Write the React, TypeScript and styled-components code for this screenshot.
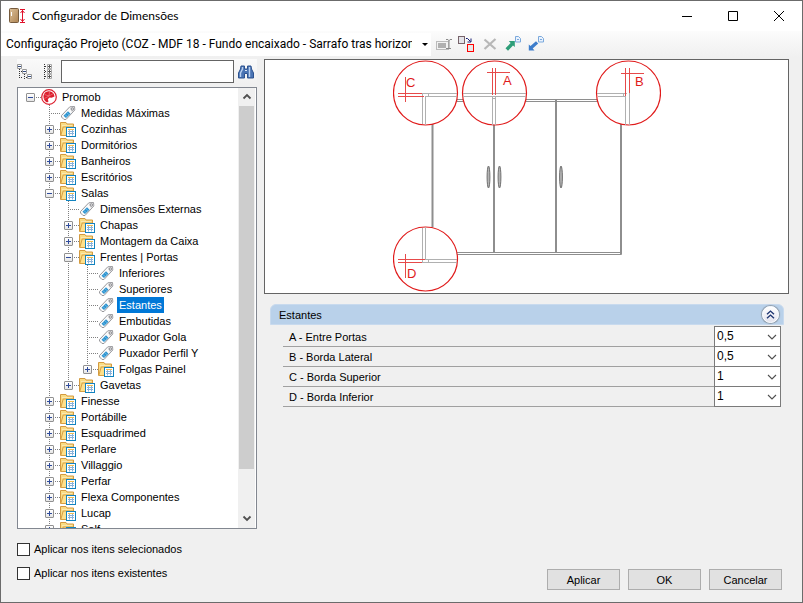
import React, { useState } from "react";
import styled, { createGlobalStyle, css } from "styled-components";

const ui = '"Liberation Sans", Arial, sans-serif';
const caption = 'Lato, "Segoe UI", sans-serif';
const toolbarFont = 'Roboto, "Segoe UI", sans-serif';

const GlobalStyle = createGlobalStyle`
  *, *::before, *::after { box-sizing: border-box; }
  html, body, #root { height: 100%; }
  body { margin: 0; font: 11px/16px ${ui}; color: #000; background: #f0f0f0; }
  button, input, select { font: inherit; color: inherit; }
  svg { display: block; flex: none; }
`;

const Window = styled.main`
  display: flex;
  flex-direction: column;
  height: 100%;
  border: 1px solid #6b6b6b;
  background: #f0f0f0;
`;

const TitleBar = styled.header`
  display: flex;
  align-items: center;
  gap: 6px;
  height: 30px;
  flex: none;
  padding-left: 8px;
  background: #fff;
`;

const Title = styled.h1`
  flex: 1;
  margin: 0;
  font: 400 12px/16px ${caption};
  white-space: nowrap;
`;

const CaptionButtons = styled.div`
  display: flex;
`;

const CaptionButton = styled.button`
  display: flex;
  align-items: center;
  justify-content: center;
  width: 46px;
  height: 30px;
  padding: 0;
  border: 0;
  background: none;
  &:hover { background: #e5e5e5; }
`;

const Toolbar = styled.div`
  display: flex;
  align-items: center;
  flex: none;
  height: 26px;
  background: linear-gradient(#fcfcfc, #f0f0f0);
`;

const ProjectBox = styled.div`
  display: grid;
  align-items: center;
  width: 430px;
  height: 23px;
  background: #fff;
  > * { grid-area: 1 / 1; }
  > svg { justify-self: end; margin-right: 3px; pointer-events: none; }
`;

const ProjectSelect = styled.select`
  appearance: none;
  width: 100%;
  height: 23px;
  padding: 0 19px 0 5px;
  border: 0;
  outline: 0;
  background: none;
  font: 12px/16px ${toolbarFont};
`;

const ToolButton = styled.button`
  display: flex;
  align-items: center;
  justify-content: center;
  width: 23px;
  height: 23px;
  padding: 0;
  border: 0;
  background: none;
`;

const TreeButton = styled(ToolButton)`
  width: auto;
`;

const ToolGroup = styled.div`
  display: flex;
  padding-left: 1px;
`;

const TreeTools = styled.div`
  display: flex;
  gap: 10px;
  padding-right: 9px;
`;

const Body = styled.div`
  display: flex;
  flex: 1;
  min-height: 0;
  gap: 7px;
  padding: 2px 13px 12px 16px;
`;

const Sidebar = styled.aside`
  display: flex;
  flex-direction: column;
  width: 240px;
  flex: none;
`;

const SearchRow = styled.div`
  display: flex;
  align-items: center;
  height: 25px;
  margin-bottom: 3px;
  background: linear-gradient(#fafafa, #f0f0f0);
`;

const SearchInput = styled.input`
  flex: 1;
  min-width: 0;
  height: 23px;
  padding: 0 4px;
  border: 1px solid #646464;
  outline: 0;
  background: #fff;
`;

const TreeBox = styled.div`
  display: flex;
  flex: 1;
  min-height: 0;
  border: 1px solid #828790;
  background: #fff;
  padding-right: 1px;
`;

const TreeList = styled.ul`
  flex: 1;
  min-width: 0;
  margin: 0;
  padding: 1px 0 0 4px;
  list-style: none;
  overflow: hidden;
`;

const TreeRow = styled.li`
  display: flex;
  align-items: center;
  height: 16px;
`;

const Guide = styled.span<{ $line?: "full" | "upper" | "none"; $branch?: boolean }>`
  position: relative;
  display: flex;
  align-items: center;
  justify-content: center;
  flex: none;
  width: 19px;
  height: 16px;
  padding-right: 2px;
  ${(p) => p.$line && p.$line !== "none" && css`
    &::before {
      content: "";
      position: absolute;
      left: 8px;
      top: 0;
      width: 1px;
      height: ${p.$line === "upper" ? "8px" : "16px"};
      background: repeating-linear-gradient(#808080 0 1px, transparent 1px 2px);
    }
  `}
  ${(p) => p.$branch && css`
    &::after {
      content: "";
      position: absolute;
      left: 9px;
      right: 0;
      top: 8px;
      height: 1px;
      background: repeating-linear-gradient(90deg, transparent 0 1px, #808080 1px 2px);
    }
  `}
`;

const Expander = styled.button`
  position: relative;
  z-index: 1;
  width: 9px;
  height: 9px;
  padding: 0;
  border: 1px solid #919191;
  border-radius: 1px;
  background: linear-gradient(#fff, #e6e6e6);
  > svg { width: 7px; height: 7px; }
`;

const NodeLabel = styled.span<{ $selected?: boolean }>`
  margin-left: 3px;
  padding: 0 2px;
  white-space: nowrap;
  color: ${(p) => (p.$selected ? "#fff" : "#000")};
  background: ${(p) => (p.$selected ? "#0078d7" : "transparent")};
`;

const ScrollBar = styled.div`
  display: flex;
  flex-direction: column;
  width: 17px;
  padding-bottom: 1px;
  background: #f0f0f0;
`;

const ScrollButton = styled.button`
  display: flex;
  align-items: center;
  justify-content: center;
  height: 18px;
  flex: none;
  padding: 0;
  border: 0;
  background: #f0f0f0;
`;

const ScrollTrack = styled.div`
  flex: 1;
`;

const ScrollThumb = styled.div`
  height: 90%;
  margin: 0 1px;
  background: #cdcdcd;
`;

const CheckList = styled.div`
  display: flex;
  flex-direction: column;
  gap: 8px;
  padding: 12px 0 9px;
`;

const CheckLabel = styled.label`
  display: flex;
  align-items: center;
  gap: 4px;
  height: 16px;
`;

const CheckBox = styled.input`
  appearance: none;
  width: 13px;
  height: 13px;
  margin: 0;
  border: 1px solid #333;
  background: #fff;
  &:checked { box-shadow: inset 0 0 0 2px #fff; background: #0078d7; }
`;

const Content = styled.section`
  display: flex;
  flex-direction: column;
  flex: 1;
  min-width: 0;
`;

const Preview = styled.div`
  display: flex;
  justify-content: center;
  border: 1px solid #646464;
  background: #fff;
`;

const Group = styled.section`
  margin: 10px 5px 0 6px;
`;

const GroupHeader = styled.header`
  display: flex;
  align-items: center;
  justify-content: space-between;
  height: 21px;
  padding: 0 4px 0 8px;
  border: 1px solid #c8daee;
  border-radius: 6px 6px 0 0;
  background: #b9d1ea;
`;

const GroupTitle = styled.h2`
  margin: 0;
  font: 400 11px/16px ${ui};
`;

const CollapseButton = styled.button`
  display: flex;
  align-items: center;
  justify-content: center;
  width: 17px;
  height: 17px;
  padding: 0;
  border: 1px solid #fff;
  border-radius: 50%;
  background: linear-gradient(#fff, #e4e4ee);
  box-shadow: 0 0 1px 1px #8f9ba8;
`;

const FieldList = styled.div`
  margin: 2px 3px 0 13px;
`;

const Field = styled.div`
  display: flex;
  align-items: center;
  height: 20px;
  border-bottom: 1px solid #a0a0a0;
  padding-left: 6px;
`;

const FieldLabel = styled.label`
  flex: 1;
`;

const ValueBox = styled.div`
  display: grid;
  align-items: center;
  align-self: start;
  width: 67px;
  height: 21px;
  margin-top: -1px;
  border: 1px solid #7a7a7a;
  background: #fff;
  > * { grid-area: 1 / 1; }
  > svg { justify-self: end; margin-right: 3px; pointer-events: none; }
`;

const ValueSelect = styled.select`
  appearance: none;
  width: 100%;
  height: 19px;
  padding: 0 18px 1px 2px;
  border: 0;
  outline: 0;
  background: none;
  font-size: 12px;
`;

const Actions = styled.footer`
  display: flex;
  justify-content: flex-end;
  gap: 8px;
  margin-top: auto;
  padding-right: 7px;
`;

const ActionButton = styled.button`
  width: 73px;
  height: 21px;
  padding: 0;
  border: 1px solid #adadad;
  background: #e1e1e1;
`;

const FolderIcon = () => (
  <svg width="16" height="16" viewBox="0 0 16 16">
    <path d="M.5 14.500V1.500H6l1 1.500h6.500V7" fill="#f9dc84" stroke="#d39a40" />
    <path d="M.8 14.500 3.200 6H13v8.500z" fill="#ffe08a" stroke="#d6a044" />
    <path d="M2 4.500h10" stroke="#fbe9b0" />
    <rect x="6.500" y="6.500" width="9" height="9" fill="#fff" stroke="#1283bf" />
    <path d="M8 8.500h6" stroke="#f1bd4f" />
    <path d="M8 10.500h6M8 12.500h6M9.500 9v5.500M12.500 9v5.500" stroke="#8bb3da" />
  </svg>
);

const TagIcon = () => (
  <svg width="16" height="16" viewBox="0 0 16 16">
    <path d="M1.500 10.500 9.800 1.800 14.500 1.500 14.800 5 6 14.500H4L1.500 12z" fill="#fafafa" stroke="#98989c" />
    <path d="M10 2.500 14 2l.4 3-2.500 2.500z" fill="#d9d9dc" />
    <path d="m3.500 10.700 4.500-4.500 2.500 2.500L6 13z" fill="#2d93cf" />
    <path d="m5 9.500 2.300 2.300M6.800 7.500 9 9.800" stroke="#8fd0f2" strokeWidth=".7" />
    <circle cx="12.300" cy="4" r="1.200" fill="#fff" stroke="#858589" />
  </svg>
);

const PromobIcon = () => (
  <svg width="16" height="16" viewBox="0 0 16 16">
    <circle cx="8" cy="8" r="7.300" fill="#fff" stroke="#dc1f2e" strokeWidth="1.200" />
    <path d="M8.300 2.300C4.500 2 2.300 5 2.500 8c.1 2.500 1.500 4.500 3.500 5.500l1.500-1-.7-2.200L8.500 8.500l2 .3 3-1.300C13.300 4.500 11 2.500 8.300 2.300z" fill="#dc1f2e" />
    <path d="M8.500 2.500 8 7M3.500 5.500 8 7l4.500-2.500M3.500 9.500 8 7" stroke="#f58b92" strokeWidth=".6" fill="none" />
  </svg>
);

const CabinetIcon = () => (
  <svg width="17" height="16" viewBox="0 0 17 16">
    <defs>
      <linearGradient id="wood" x1="0" x2="1" y1="0" y2="1">
        <stop offset="0" stopColor="#dcc19a" />
        <stop offset="1" stopColor="#ae8453" />
      </linearGradient>
    </defs>
    <rect x=".5" y=".5" width="9" height="14" rx="1" fill="url(#wood)" stroke="#765b3d" />
    <path d="M2.500 4v4" stroke="#fff" />
    <path d="M11 1.500h5M11 14.500h5" stroke="#e0102a" />
    <path d="M13.500 2v12M11.500 5l2-2.500 2 2.500M11.500 11l2 2.500 2-2.500" fill="none" stroke="#e0102a" />
  </svg>
);

const Chevron = ({ up = false, thin = false }: { up?: boolean; thin?: boolean }) => (
  <svg width="10" height="10" viewBox="0 0 10 10">
    <path
      d={up ? "M1.500 6.500 5 3l3.500 3.500" : thin ? "M1 3l4 4 4-4" : "M1.500 3.500 5 7l3.500-3.500"}
      fill="none"
      stroke="#505050"
      strokeWidth={thin ? 1.1 : 1.8}
    />
  </svg>
);

const CollapseTreeIcon = () => (
  <svg width="16" height="16" viewBox="0 0 16 16" fill="none">
    <path d="M2.500 5v10M7.500 10v5M4 7.500h2M4 13.500h2M9 13.500h1" stroke="#333" strokeDasharray="1 1" />
    <path d="M.5.500h4v4h-4zM5.500 5.500h4v4h-4zM10.500 10.500h4v4h-4z" fill="#fff" stroke="#9a9a9a" />
    <path d="M1 2.500h3M6 7.500h3M11 12.500h3" stroke="#344d82" />
  </svg>
);

const ExpandTreeIcon = () => (
  <svg width="9" height="16" viewBox="0 0 9 16" fill="none">
    <path d="M1.500 0v16M2 2.500h2M2 7.500h2M2 12.500h2" stroke="#333" strokeDasharray="1 1" />
    <path d="M4.500.500h4v4h-4zM4.500 5.500h4v4h-4zM4.500 10.500h4v4h-4z" fill="#fff" stroke="#a8a8a8" />
    <path d="M5 2.500h3M6.500 1v3M5 7.500h3M6.500 6v3M5 12.500h3M6.500 11v3" stroke="#555" />
  </svg>
);

const BinocularsIcon = () => (
  <svg width="16" height="14" viewBox="0 0 16 14">
    <path d="M3 1h3.500v3h3V1H13l.5 3 2 4v5H9.500V8.500h-3V13H.5V8l2-4z" fill="#4a74b4" stroke="#2c528f" />
    <path d="M4.500 2v2L2.500 8v4M11.500 2v2L11.500 8v4" stroke="#b9d0f0" strokeWidth="1.400" fill="none" />
    <path d="M7 5.500h2" stroke="#dce8f8" />
  </svg>
);

const RenameIcon = () => (
  <svg width="16" height="13" viewBox="0 0 16 13" fill="none">
    <rect x=".5" y="3.500" width="12" height="8" fill="#f2f2f2" stroke="#bbb" />
    <path d="M2 5h8v5H2z" fill="#b0b0b0" />
    <path d="M10 1.500h2l1 1 1-1h2M13 2v8M10 10.500h5" stroke="#8a8a8a" />
  </svg>
);

const ReplaceIcon = () => (
  <svg width="17" height="17" viewBox="0 0 17 17" fill="none">
    <rect x=".5" y=".5" width="6" height="7" fill="#e4e4e9" stroke="#77636a" />
    <rect x="9.500" y="8.500" width="6" height="7" fill="#e8e8e8" stroke="#f00" />
    <path d="M8 2.500h1.500l3 3M13 2.500v3.500H9.500" stroke="#141b73" />
  </svg>
);

const DeleteIcon = () => (
  <svg width="14" height="12" viewBox="0 0 14 12">
    <path d="m1.500 1.500 11 9.500M12.500 1 1.500 11" stroke="#b7b7b7" strokeWidth="2.200" />
  </svg>
);

const TransferIcon = ({ color, down = false }: { color: string; down?: boolean }) => (
  <svg width="16" height="16" viewBox="0 0 16 16">
    <path d={down ? "M.8 14.500V8.500l1.700 1.500L8 5.200l2.200 2.300-5.500 5L6.500 14.500z" : "M9.800 5v6L8 9.400 3 14.800.5 12.300 5.600 7.100 3.800 5z"} fill={color} />
    <path d="M10.500.500h3l2 2v3.500h-5z" fill="#e9f2fd" stroke="#7ba9dc" />
    <path d="M12 3.500h2" stroke="#7ba9dc" />
  </svg>
);

const CabinetDrawing = () => (
  <svg width="268" height="233" viewBox="393 60 268 233" fill="none" role="img" aria-label="Estantes">
    <g stroke="#8e8e8e" strokeWidth="1">
      <path d="M457 99.500h8M457 101.500h8M526 99.500h72M526 101.500h72M457 252.500h164.500M457 254.500h164.500v-2" />
    </g>
    <path d="M432.500 124v103M494 125v127.500M556 100v152.500M621 124v130" stroke="#8e8e8e" strokeWidth="2" />
    <g fill="#fff" stroke="#e01b1b" strokeWidth="1.200">
      <circle cx="425.500" cy="93" r="32" />
      <circle cx="494.500" cy="93" r="32" />
      <circle cx="628.500" cy="93" r="32" />
      <circle cx="425.500" cy="259" r="32" />
    </g>
    <g stroke="#b0b0b0">
      <path d="M422.500 93v31M425.500 97v28M422 93.500h35M425 96.500h32M428.500 94v2" />
      <path d="M463 93.500h63M463 96.500h63M492.500 97v28M495.500 97v28M492.500 98.500h3" />
      <path d="M597 93.500h30M598 96.500h28M625.500 96v29M629.500 93v32M623.500 94v2" />
      <path d="M422.500 228v34M425.500 227v32M425 259.500h32M422 262.500h35M428.500 260v2" />
    </g>
    <g stroke="#e64a4a">
      <path d="M398 93.500h24M398 96.500h26M405.500 77v25" />
      <path d="M487 72.500h23M492.500 68v27M495.500 68v27" />
      <path d="M621 73.500h23M625.500 68v28M629.500 68v25" />
      <path d="M398 259.500h27M398 262.500h24M405.500 254v24" />
    </g>
    <g fill="#b4b4b4" stroke="#707070">
      <ellipse cx="488.500" cy="177" rx="1.400" ry="11" />
      <ellipse cx="499.500" cy="177" rx="1.400" ry="11" />
      <ellipse cx="561" cy="177" rx="1.400" ry="11" />
    </g>
    <g fill="#e01b1b" fontFamily="Liberation Sans, Arial, sans-serif" fontSize="13">
      <text x="406" y="87">C</text>
      <text x="503" y="85">A</text>
      <text x="635" y="86">B</text>
      <text x="407" y="278">D</text>
    </g>
  </svg>
);

type Line = "full" | "upper" | "none";
type Node = { label: string; icon?: "tag" | "root"; open?: boolean; children?: Node[] };

const tree: Node[] = [
  {
    label: "Promob",
    icon: "root",
    open: true,
    children: [
      { label: "Medidas Máximas", icon: "tag" },
      { label: "Cozinhas" },
      { label: "Dormitórios" },
      { label: "Banheiros" },
      { label: "Escritórios" },
      {
        label: "Salas",
        open: true,
        children: [
          { label: "Dimensões Externas", icon: "tag" },
          { label: "Chapas" },
          { label: "Montagem da Caixa" },
          {
            label: "Frentes | Portas",
            open: true,
            children: [
              { label: "Inferiores", icon: "tag" },
              { label: "Superiores", icon: "tag" },
              { label: "Estantes", icon: "tag" },
              { label: "Embutidas", icon: "tag" },
              { label: "Puxador Gola", icon: "tag" },
              { label: "Puxador Perfil Y", icon: "tag" },
              { label: "Folgas Painel" },
            ],
          },
          { label: "Gavetas" },
        ],
      },
      { label: "Finesse" },
      { label: "Portábille" },
      { label: "Esquadrimed" },
      { label: "Perlare" },
      { label: "Villaggio" },
      { label: "Perfar" },
      { label: "Flexa Componentes" },
      { label: "Lucap" },
      { label: "Self" },
    ],
  },
];

type BranchProps = { nodes: Node[]; guides: Line[]; selected: string; onSelect: (label: string) => void };

const Branch = ({ nodes, guides, selected, onSelect }: BranchProps) => (
  <>
    {nodes.map((node, i) => {
      const root = node.icon === "root";
      const last = i === nodes.length - 1;
      return (
        <React.Fragment key={node.label}>
          <TreeRow role="treeitem" aria-level={guides.length + 1} aria-selected={selected === node.label} onClick={() => onSelect(node.label)}>
            {guides.map((line, n) => <Guide key={n} $line={line} />)}
            <Guide $line={root ? "none" : last ? "upper" : "full"} $branch>
              {node.icon !== "tag" && (
                <Expander aria-label={node.open ? "Recolher" : "Expandir"}>
                  <svg viewBox="0 0 7 7">
                    <path d={node.open ? "M1 3.500h5" : "M1 3.500h5M3.500 1v5"} stroke="#2f4b9b" />
                  </svg>
                </Expander>
              )}
            </Guide>
            {root ? <PromobIcon /> : node.icon === "tag" ? <TagIcon /> : <FolderIcon />}
            <NodeLabel $selected={selected === node.label}>{node.label}</NodeLabel>
          </TreeRow>
          {node.open && node.children && (
            <Branch nodes={node.children} guides={[...guides, root || last ? "none" : "full"]} selected={selected} onSelect={onSelect} />
          )}
        </React.Fragment>
      );
    })}
  </>
);

const fields = [
  { id: "a", label: "A - Entre Portas", value: "0,5" },
  { id: "b", label: "B - Borda Lateral", value: "0,5" },
  { id: "c", label: "C - Borda Superior", value: "1" },
  { id: "d", label: "D - Borda Inferior", value: "1" },
];

export default function App() {
  const [selected, setSelected] = useState("Estantes");
  return (
    <>
      <GlobalStyle />
      <Window>
        <TitleBar>
          <CabinetIcon />
          <Title>Configurador de Dimensões</Title>
          <CaptionButtons>
            <CaptionButton aria-label="Minimizar">
              <svg width="10" height="10" viewBox="0 0 10 10"><path d="M0 5.500h10" stroke="#000" /></svg>
            </CaptionButton>
            <CaptionButton aria-label="Maximizar">
              <svg width="10" height="10" viewBox="0 0 10 10"><path d="M.5.500h9v9h-9z" fill="none" stroke="#000" /></svg>
            </CaptionButton>
            <CaptionButton aria-label="Fechar">
              <svg width="10" height="10" viewBox="0 0 10 10"><path d="m0 0 10 10M10 0 0 10" stroke="#000" /></svg>
            </CaptionButton>
          </CaptionButtons>
        </TitleBar>
        <Toolbar>
          <ProjectBox>
            <ProjectSelect aria-label="Configuração">
              <option>Configuração Projeto (COZ - MDF 18 - Fundo encaixado - Sarrafo tras horizontal)</option>
            </ProjectSelect>
            <svg width="6" height="3" viewBox="0 0 6 3"><path d="M0 0h6L3 3z" fill="#000" /></svg>
          </ProjectBox>
          <ToolGroup>
            <ToolButton aria-label="Renomear"><RenameIcon /></ToolButton>
            <ToolButton aria-label="Substituir"><ReplaceIcon /></ToolButton>
            <ToolButton aria-label="Excluir"><DeleteIcon /></ToolButton>
            <ToolButton aria-label="Exportar"><TransferIcon color="#2e9e78" /></ToolButton>
            <ToolButton aria-label="Importar"><TransferIcon color="#3d7dcb" down /></ToolButton>
          </ToolGroup>
        </Toolbar>
        <Body>
          <Sidebar>
            <SearchRow>
              <TreeTools>
                <TreeButton aria-label="Recolher tudo"><CollapseTreeIcon /></TreeButton>
                <TreeButton aria-label="Expandir tudo"><ExpandTreeIcon /></TreeButton>
              </TreeTools>
              <SearchInput aria-label="Pesquisar" />
              <ToolButton aria-label="Localizar"><BinocularsIcon /></ToolButton>
            </SearchRow>
            <TreeBox>
              <TreeList role="tree" aria-label="Itens">
                <Branch nodes={tree} guides={[]} selected={selected} onSelect={setSelected} />
              </TreeList>
              <ScrollBar>
                <ScrollButton aria-label="Rolar para cima"><Chevron up /></ScrollButton>
                <ScrollTrack><ScrollThumb /></ScrollTrack>
                <ScrollButton aria-label="Rolar para baixo"><Chevron /></ScrollButton>
              </ScrollBar>
            </TreeBox>
            <CheckList>
              <CheckLabel><CheckBox type="checkbox" />Aplicar nos itens selecionados</CheckLabel>
              <CheckLabel><CheckBox type="checkbox" />Aplicar nos itens existentes</CheckLabel>
            </CheckList>
          </Sidebar>
          <Content>
            <Preview><CabinetDrawing /></Preview>
            <Group>
              <GroupHeader>
                <GroupTitle>Estantes</GroupTitle>
                <CollapseButton aria-label="Recolher grupo">
                  <svg width="9" height="9" viewBox="0 0 9 9"><path d="m1 4.300 3.500-3.200L8 4.300M1 8.300l3.500-3.200L8 8.300" fill="none" stroke="#1f3672" strokeWidth="1.400" /></svg>
                </CollapseButton>
              </GroupHeader>
              <FieldList>
                {fields.map((f) => (
                  <Field key={f.id}>
                    <FieldLabel htmlFor={f.id}>{f.label}</FieldLabel>
                    <ValueBox>
                      <ValueSelect id={f.id} defaultValue={f.value}><option>{f.value}</option></ValueSelect>
                      <Chevron thin />
                    </ValueBox>
                  </Field>
                ))}
              </FieldList>
            </Group>
            <Actions>
              <ActionButton>Aplicar</ActionButton>
              <ActionButton>OK</ActionButton>
              <ActionButton>Cancelar</ActionButton>
            </Actions>
          </Content>
        </Body>
      </Window>
    </>
  );
}
